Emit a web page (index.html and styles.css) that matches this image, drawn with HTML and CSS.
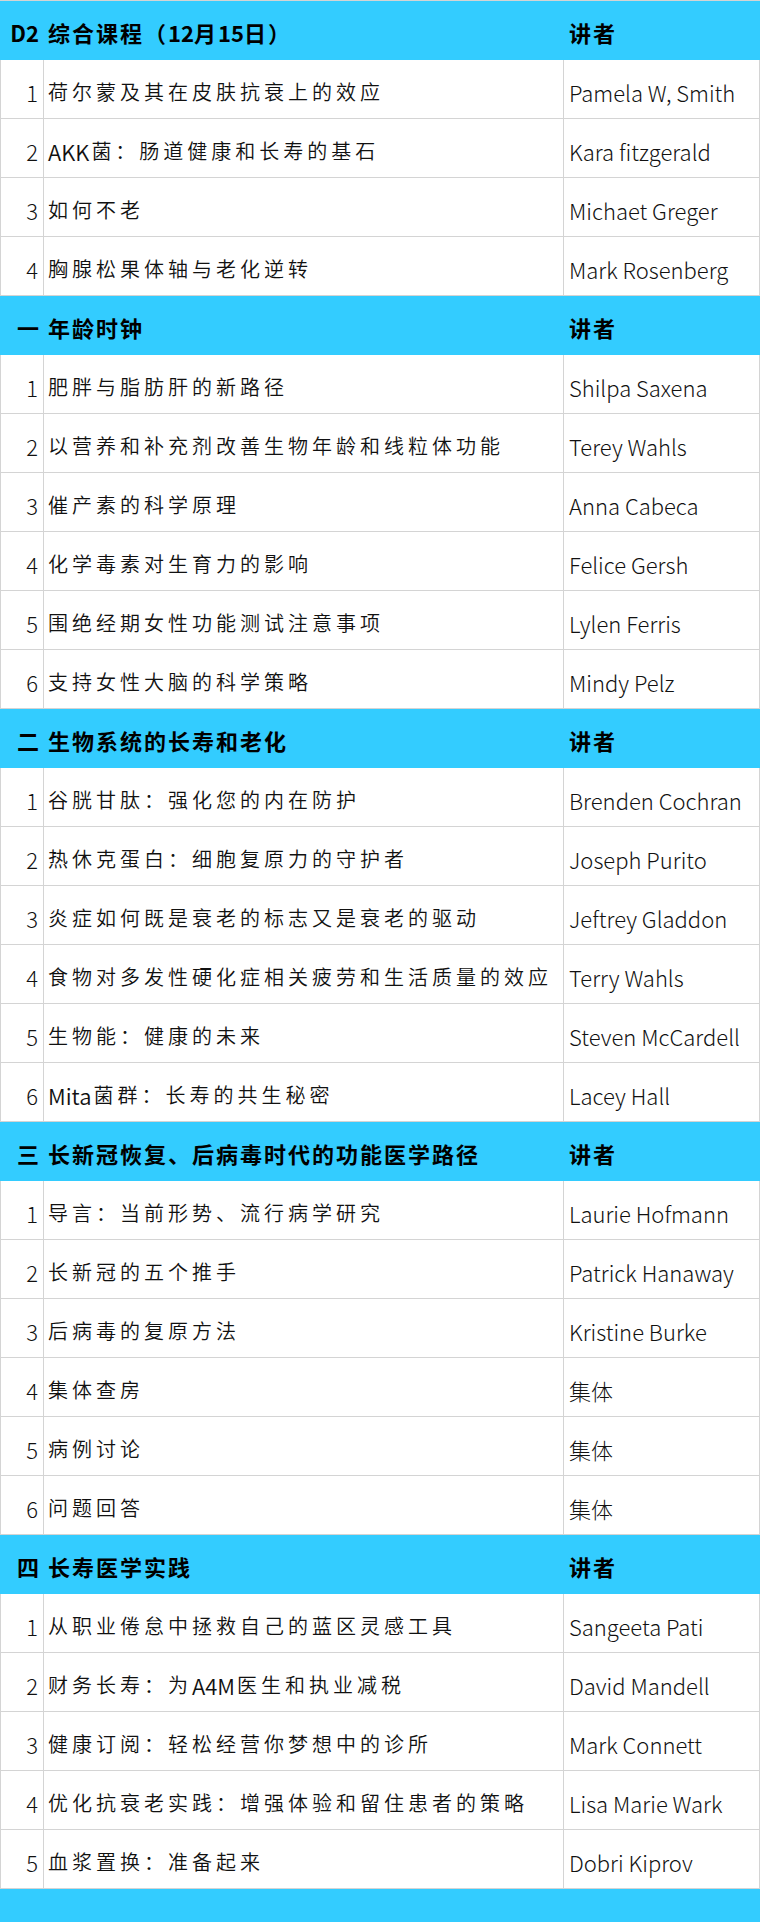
FILE: index.html
```html
<!DOCTYPE html>
<html>

<head>
    <meta charset="UTF-8">
    <title>课程表</title>
    <link rel="stylesheet" href="styles.css">
</head>

<body>

    <div class="sheet">
        <!-- D2 -->
        <div class="row head"><div class="no">D2</div><div class="title">综合课程（<span class="en">12</span>月<span class="en">15</span>日）</div><div class="who">讲者</div></div>
        <div class="row"><div class="no">1</div><div class="title">荷尔蒙及其在皮肤抗衰上的效应</div><div class="who">Pamela W, Smith</div></div>
        <div class="row"><div class="no">2</div><div class="title"><span class="en">AKK</span>菌：肠道健康和长寿的基石</div><div class="who">Kara fitzgerald</div></div>
        <div class="row"><div class="no">3</div><div class="title">如何不老</div><div class="who">Michaet Greger</div></div>
        <div class="row"><div class="no">4</div><div class="title">胸腺松果体轴与老化逆转</div><div class="who">Mark Rosenberg</div></div>

        <!-- 一 -->
        <div class="row head"><div class="no">一</div><div class="title">年龄时钟</div><div class="who">讲者</div></div>
        <div class="row"><div class="no">1</div><div class="title">肥胖与脂肪肝的新路径</div><div class="who">Shilpa Saxena</div></div>
        <div class="row"><div class="no">2</div><div class="title">以营养和补充剂改善生物年龄和线粒体功能</div><div class="who">Terey Wahls</div></div>
        <div class="row"><div class="no">3</div><div class="title">催产素的科学原理</div><div class="who">Anna Cabeca</div></div>
        <div class="row"><div class="no">4</div><div class="title">化学毒素对生育力的影响</div><div class="who">Felice Gersh</div></div>
        <div class="row"><div class="no">5</div><div class="title">围绝经期女性功能测试注意事项</div><div class="who">Lylen Ferris</div></div>
        <div class="row"><div class="no">6</div><div class="title">支持女性大脑的科学策略</div><div class="who">Mindy Pelz</div></div>

        <!-- 二 -->
        <div class="row head"><div class="no">二</div><div class="title">生物系统的长寿和老化</div><div class="who">讲者</div></div>
        <div class="row"><div class="no">1</div><div class="title">谷胱甘肽：强化您的内在防护</div><div class="who">Brenden Cochran</div></div>
        <div class="row"><div class="no">2</div><div class="title">热休克蛋白：细胞复原力的守护者</div><div class="who">Joseph Purito</div></div>
        <div class="row"><div class="no">3</div><div class="title">炎症如何既是衰老的标志又是衰老的驱动</div><div class="who">Jeftrey Gladdon</div></div>
        <div class="row"><div class="no">4</div><div class="title">食物对多发性硬化症相关疲劳和生活质量的效应</div><div class="who">Terry Wahls</div></div>
        <div class="row"><div class="no">5</div><div class="title">生物能：健康的未来</div><div class="who">Steven McCardell</div></div>
        <div class="row"><div class="no">6</div><div class="title"><span class="en">Mita</span>菌群：长寿的共生秘密</div><div class="who">Lacey Hall</div></div>

        <!-- 三 -->
        <div class="row head"><div class="no">三</div><div class="title">长新冠恢复、后病毒时代的功能医学路径</div><div class="who">讲者</div></div>
        <div class="row"><div class="no">1</div><div class="title">导言：当前形势、流行病学研究</div><div class="who">Laurie Hofmann</div></div>
        <div class="row"><div class="no">2</div><div class="title">长新冠的五个推手</div><div class="who">Patrick Hanaway</div></div>
        <div class="row"><div class="no">3</div><div class="title">后病毒的复原方法</div><div class="who">Kristine Burke</div></div>
        <div class="row"><div class="no">4</div><div class="title">集体查房</div><div class="who">集体</div></div>
        <div class="row"><div class="no">5</div><div class="title">病例讨论</div><div class="who">集体</div></div>
        <div class="row"><div class="no">6</div><div class="title">问题回答</div><div class="who">集体</div></div>

        <!-- 四 -->
        <div class="row head"><div class="no">四</div><div class="title">长寿医学实践</div><div class="who">讲者</div></div>
        <div class="row"><div class="no">1</div><div class="title">从职业倦怠中拯救自己的蓝区灵感工具</div><div class="who">Sangeeta Pati</div></div>
        <div class="row"><div class="no">2</div><div class="title">财务长寿：为<span class="en">A4M</span>医生和执业减税</div><div class="who">David Mandell</div></div>
        <div class="row"><div class="no">3</div><div class="title">健康订阅：轻松经营你梦想中的诊所</div><div class="who">Mark Connett</div></div>
        <div class="row"><div class="no">4</div><div class="title">优化抗衰老实践：增强体验和留住患者的策略</div><div class="who">Lisa Marie Wark</div></div>
        <div class="row"><div class="no">5</div><div class="title">血浆置换：准备起来</div><div class="who">Dobri Kiprov</div></div>

        <div class="row head foot"></div>
    </div>

</body>

</html>
```

FILE: styles.css
```css
body {
    margin: 0;
    background: #fff;
    font-family: "Noto Sans CJK SC", "Noto Sans", sans-serif;
    color: #111;
}

.sheet {
    width: 760px;
    border-top: 1px solid #d4d4d4;
}

.row {
    display: grid;
    grid-template-columns: 44px 520px 196px;
    height: 59px;
    box-sizing: border-box;
    border-bottom: 1px solid #d4d4d4;
}

.row > div {
    display: flex;
    align-items: center;
    padding-top: 5px;
    box-sizing: border-box;
    white-space: nowrap;
    overflow: hidden;
    font-weight: 300;
}

/* 普通行 */

.row .no {
    justify-content: flex-end;
    padding-right: 5px;
    border-left: 1px solid #d4d4d4;
    border-right: 1px solid #d4d4d4;
    font-size: 22px;
}

.row .title {
    padding-left: 4px;
    border-right: 1px solid #d4d4d4;
    font-size: 20px;
    letter-spacing: 4px;
    font-weight: 350;
}

.row .title .en {
    font-size: 22px;
    letter-spacing: 0;
    margin-right: 2px;
}

.row .who {
    padding-left: 5px;
    border-right: 1px solid #d4d4d4;
    font-size: 22px;
}

/* 蓝色标题行 */

.row.head {
    background: #33ccff;
    border-bottom: none;
}

.row.head > div {
    border-left: none;
    border-right: none;
    font-weight: bold;
    color: #000;
    padding-top: 3px;
}

.row.head .no {
    font-size: 22px;
}

.row.head .title {
    font-size: 22px;
    letter-spacing: 2px;
}

.row.head .title .en {
    letter-spacing: 0;
    margin-right: 0;
}

.row.head .who {
    font-size: 22px;
    letter-spacing: 2px;
}

.row.foot {
    height: 40px;
}
```
